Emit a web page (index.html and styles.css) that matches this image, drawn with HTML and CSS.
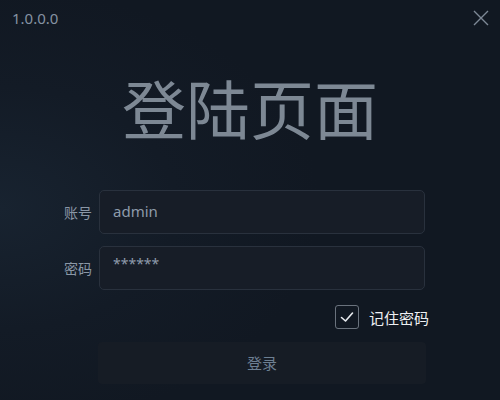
FILE: index.html
```html
<!DOCTYPE html>
<html lang="zh-CN">
<head>
<meta charset="utf-8">
<title>登陆页面</title>
<link rel="stylesheet" href="styles.css">
</head>
<body>
<div class="app">
  <header class="topbar">
    <span class="version">1.0.0.0</span>
    <button class="close" aria-label="关闭">
      <svg width="16" height="16" viewBox="0 0 16 16"><path d="M1 1 L15 15 M15 1 L1 15" stroke="#7d8896" stroke-width="1.4" fill="none"/></svg>
    </button>
  </header>
  <h1 class="title">登陆页面</h1>
  <form class="form">
    <div class="row">
      <label class="label">账号</label>
      <div class="input">admin</div>
    </div>
    <div class="row">
      <label class="label">密码</label>
      <div class="input pwd">******</div>
    </div>
    <div class="remember">
      <span class="check">
        <svg width="16" height="16" viewBox="0 0 16 16"><path d="M2.5 8.5 L6.5 12 L13.5 4" stroke="#e8ebef" stroke-width="1.6" fill="none" stroke-linecap="round" stroke-linejoin="round"/></svg>
      </span>
      <span class="remember-text">记住密码</span>
    </div>
    <div class="submit">登录</div>
  </form>
</div>
</body>
</html>
```
FILE: styles.css
```css
html, body {
  margin: 0;
  padding: 0;
  background: #111822;
}
.app {
  width: 500px;
  height: 400px;
  overflow: hidden;
  display: flex;
  flex-direction: column;
  background: radial-gradient(ellipse 320px 220px at 0% 52%, #182330 0%, #131b26 55%, #111822 100%);
  font-family: "Noto Sans CJK SC", "Noto Sans", sans-serif;
}
.topbar {
  display: flex;
  justify-content: space-between;
  align-items: center;
  height: 36px;
  padding: 0 11px 0 12px;
}
.version {
  font-family: "Noto Sans", "Liberation Sans", sans-serif;
  font-size: 15px;
  color: #8592a2;
  line-height: 18px;
}
.close {
  background: none;
  border: 0;
  padding: 0;
  width: 16px;
  height: 16px;
  display: flex;
}
.title {
  margin: 30px 0 0;
  height: 80px;
  line-height: 80px;
  text-align: center;
  font-size: 64px;
  font-weight: 400;
  color: #7d8894;
}
.form {
  margin: 44px 0 0;
  display: flex;
  flex-direction: column;
}
.row {
  display: flex;
  align-items: center;
  padding-left: 48px;
  height: 44px;
  margin-bottom: 12px;
}
.label {
  width: 44px;
  text-align: right;
  font-size: 14px;
  color: #8a97a6;
  margin-right: 7px;
}
.input {
  box-sizing: border-box;
  width: 326px;
  height: 44px;
  border: 1px solid #29313d;
  border-radius: 5px;
  background: #171d27;
  padding-left: 13px;
  line-height: 40px;
  font-family: "Noto Sans", "Liberation Sans", sans-serif;
  font-size: 15px;
  color: #8e9bab;
}
.pwd {
  line-height: 34px;
  font-size: 14px;
}
.remember {
  display: flex;
  align-items: center;
  justify-content: flex-end;
  padding-right: 71px;
  margin-top: 3px;
  height: 24px;
}
.check {
  box-sizing: border-box;
  width: 24px;
  height: 24px;
  border: 1.5px solid #6a727d;
  border-radius: 3px;
  display: flex;
  align-items: center;
  justify-content: center;
  margin-right: 10px;
}
.remember-text {
  font-size: 15px;
  color: #eef0f3;
}
.submit {
  box-sizing: border-box;
  margin: 13px 0 0 98px;
  width: 328px;
  height: 42px;
  border-radius: 4px;
  background: #161c25;
  text-align: center;
  line-height: 42px;
  font-size: 15px;
  color: #6d7f92;
}
```
